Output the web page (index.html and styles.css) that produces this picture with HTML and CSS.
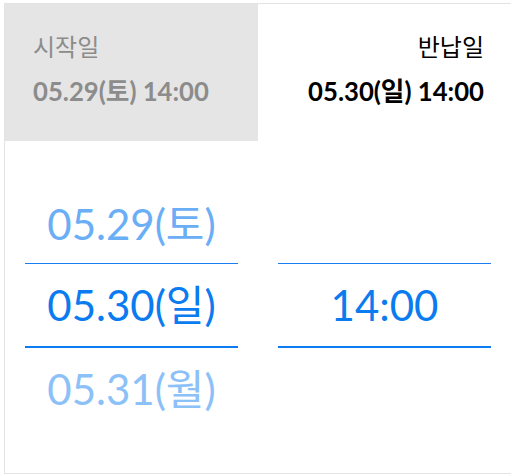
FILE: index.html
```html
<!DOCTYPE html>
<html lang="ko">
<head>
    <meta charset="UTF-8">
    <meta name="viewport" content="width=device-width, initial-scale=1.0">
    <title>대여 기간</title>
    <link rel="stylesheet" href="styles.css">
</head>
<body>
    <div class="booking">
        <div class="summary">
            <div class="tab tab-muted">
                <p class="tab-label">시작일</p>
                <p class="tab-date">05.29(토) 14:00</p>
            </div>
            <div class="tab tab-right">
                <p class="tab-label">반납일</p>
                <p class="tab-date">05.30(일) 14:00</p>
            </div>
        </div>
        <div class="picker">
            <ul class="wheel">
                <li class="near">05.29(토)</li>
                <li class="current">05.30(일)</li>
                <li class="near far">05.31(월)</li>
            </ul>
            <ul class="wheel">
                <li class="blank"></li>
                <li class="current">14:00</li>
                <li class="blank"></li>
            </ul>
        </div>
    </div>
</body>
</html>
```

FILE: styles.css
```css
* {
    padding: 0;
    margin: 0;
    list-style: none;
    box-sizing: border-box;
}
body {
    overflow: hidden;
    font-family: Lato, "Noto Sans CJK KR", sans-serif;
    background-color: #fff;
}
.booking {
    width: 508px;
    margin: 3px 0 0 4px;
    border: 1px solid #e3e3e3;
}
.summary {
    display: grid;
    grid-template-columns: 253px 1fr;
    height: 137px;
}
.tab {
    padding: 28px 28px 0 28px;
    color: #000;
}
.tab-muted {
    background-color: #e5e5e5;
    color: #8c8c8c;
}
.tab-right {
    text-align: right;
    padding-right: 27px;
}
.tab-label {
    font-size: 24px;
    line-height: 30px;
}
.tab-date {
    margin-top: 13px;
    font-size: 25.7px;
    font-weight: bold;
    line-height: 32px;
}
.picker {
    display: grid;
    grid-template-columns: 253px 1fr;
    height: 332px;
    padding-bottom: 3px;
}
.wheel {
    display: flex;
    flex-direction: column;
    justify-content: center;
    padding: 0 20px;
}
.wheel li {
    height: 80px;
    line-height: 82px;
    text-align: center;
    font-size: 42px;
    color: #0b7bf0;
}
.wheel .near {
    color: #6aaef6;
}
.wheel .far {
    color: #8cc1f8;
}
.wheel .current {
    height: 85px;
    line-height: 82px;
    border-top: 1px solid #1a7ef0;
    border-bottom: 2px solid #0d7cf2;
}
```
